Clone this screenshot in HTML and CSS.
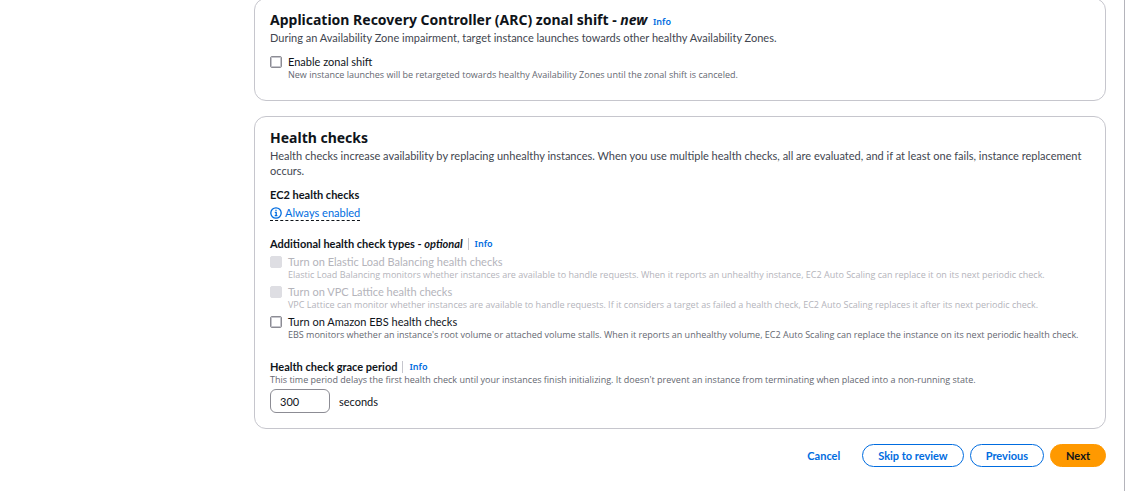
FILE: index.html
```html
<!DOCTYPE html>
<html lang="en">
<head>
<meta charset="utf-8">
<meta name="viewport" content="width=device-width, initial-scale=1">
<title>Health checks</title>
<link rel="stylesheet" href="styles.css">
</head>
<body>
<div class="shell">
  <main class="content">
    <section class="card card-zonal">
      <header class="card-header">
        <h2 class="card-title">Application Recovery Controller (ARC) zonal shift - <em>new</em> <a class="info" href="#">Info</a></h2>
        <p class="card-description">During an Availability Zone impairment, target instance launches towards other healthy Availability Zones.</p>
      </header>
      <div class="option">
        <input class="checkbox" type="checkbox" id="zonal" aria-describedby="zonal-hint">
        <label class="option-label" for="zonal">Enable zonal shift</label>
        <p class="hint" id="zonal-hint">New instance launches will be retargeted towards healthy Availability Zones until the zonal shift is canceled.</p>
      </div>
    </section>

    <section class="card">
      <header class="card-header">
        <h2 class="card-title">Health checks</h2>
        <p class="card-description">Health checks increase availability by replacing unhealthy instances. When you use multiple health checks, all are evaluated, and if at least one fails, instance replacement occurs.</p>
      </header>
      <div class="fields">
        <div class="field">
          <h3 class="field-title">EC2 health checks</h3>
          <button class="status" type="button">
            <svg class="status-icon" viewBox="0 0 12 12" aria-hidden="true"><circle cx="6" cy="6" r="5.2"/><path d="M4.8 5.4H6.2V8.5M4.7 8.7H7.4M5.4 3.4H6.6"/></svg>
            Always enabled
          </button>
        </div>
        <div class="field">
          <div class="field-heading">
            <h3 class="field-title">Additional health check types - <em>optional</em></h3>
            <a class="info info-divided" href="#">Info</a>
          </div>
          <div class="options">
            <div class="option option-disabled">
              <input class="checkbox" type="checkbox" id="elb" disabled aria-describedby="elb-hint">
              <label class="option-label" for="elb">Turn on Elastic Load Balancing health checks</label>
              <p class="hint" id="elb-hint">Elastic Load Balancing monitors whether instances are available to handle requests. When it reports an unhealthy instance, EC2 Auto Scaling can replace it on its next periodic check.</p>
            </div>
            <div class="option option-disabled">
              <input class="checkbox" type="checkbox" id="vpc" disabled aria-describedby="vpc-hint">
              <label class="option-label" for="vpc">Turn on VPC Lattice health checks</label>
              <p class="hint" id="vpc-hint">VPC Lattice can monitor whether instances are available to handle requests. If it considers a target as failed a health check, EC2 Auto Scaling replaces it after its next periodic check.</p>
            </div>
            <div class="option">
              <input class="checkbox" type="checkbox" id="ebs" aria-describedby="ebs-hint">
              <label class="option-label" for="ebs">Turn on Amazon EBS health checks</label>
              <p class="hint" id="ebs-hint">EBS monitors whether an instance's root volume or attached volume stalls. When it reports an unhealthy volume, EC2 Auto Scaling can replace the instance on its next periodic health check.</p>
            </div>
          </div>
        </div>
        <div class="field">
          <div class="field-heading">
            <label class="field-title" for="grace">Health check grace period</label>
            <a class="info info-divided" href="#">Info</a>
          </div>
          <p class="hint" id="grace-hint">This time period delays the first health check until your instances finish initializing. It doesn't prevent an instance from terminating when placed into a non-running state.</p>
          <div class="duration">
            <input class="number" type="text" inputmode="numeric" id="grace" value="300" aria-describedby="grace-hint">
            <span>seconds</span>
          </div>
        </div>
      </div>
    </section>

    <div class="actions">
      <button class="button button-link" type="button">Cancel</button>
      <button class="button" type="button">Skip to review</button>
      <button class="button" type="button">Previous</button>
      <button class="button button-primary" type="submit">Next</button>
    </div>
  </main>
</div>
</body>
</html>
```

FILE: styles.css
```css
* {
  box-sizing: border-box;
}

body {
  margin: 0;
  background: #fff;
  color: #0f141a;
  font: 11px/15px Lato, "Open Sans", sans-serif;
}

h2, h3, p {
  margin: 0;
}

button, input {
  font: inherit;
}

.shell {
  min-height: 100vh;
  margin-right: 2px;
  padding: 0 18px 0 254px;
  border-right: 1px solid #b4b4bb;
  overflow: hidden;
}

.content {
  display: flex;
  flex-direction: column;
  gap: 15px;
}

.card {
  padding: 11px 15px 15px;
  border: 1px solid #c6c6cd;
  border-radius: 12px;
}

.card-zonal {
  margin-top: -2px;
  padding-bottom: 19px;
}

.card-header {
  margin-bottom: 9px;
}

.card-title {
  font-family: "Noto Sans", sans-serif;
  font-size: 14px;
  line-height: 20px;
  font-weight: 700;
}

.card-description {
  color: #424650;
}

.info {
  margin-left: 2px;
  color: #006ce0;
  font-family: "Noto Sans", sans-serif;
  font-size: 9px;
  line-height: 12px;
  font-weight: 600;
  text-decoration: none;
}

.info-divided {
  margin-left: 5px;
  padding-left: 6px;
  border-left: 1px solid #c6c6cd;
}

.fields {
  display: flex;
  flex-direction: column;
  gap: 18px;
}

.field:first-child {
  margin-bottom: -3px;
}

.field-heading {
  display: flex;
  align-items: center;
}

.field-title {
  font-size: 11px;
  line-height: 15px;
  font-weight: 700;
}

.status {
  display: flex;
  align-items: center;
  gap: 3px;
  margin-top: 3px;
  padding: 0;
  border: 0;
  border-bottom: 1px dashed #0f141a;
  background: none;
  color: #006ce0;
}

.status-icon {
  width: 12px;
  height: 12px;
  fill: none;
  stroke: currentColor;
  stroke-width: 1.3;
}

.options {
  display: flex;
  flex-direction: column;
  gap: 3px;
  margin-top: 3px;
}

.option {
  display: grid;
  grid-template-columns: 12px 1fr;
  column-gap: 6px;
  align-items: center;
}

.checkbox {
  appearance: none;
  width: 12px;
  height: 12px;
  margin: 0;
  border: 1px solid #8c8c94;
  border-radius: 2px;
  box-shadow: inset 0 0 0 1px #c6c6cd;
}

.option .hint {
  grid-column: 2;
}

.hint {
  color: #656871;
  font-family: "Open Sans", "Noto Sans", sans-serif;
  font-size: 9px;
  line-height: 12px;
}

.option-disabled,
.option-disabled .hint {
  color: #b4b4bb;
}

.option-disabled .checkbox {
  border-color: #dedee3;
  background: #dedee3;
  box-shadow: none;
}

.duration {
  display: flex;
  align-items: center;
  gap: 9px;
  margin-top: 3px;
}

.number {
  width: 60px;
  height: 24px;
  padding: 0 9px;
  border: 1px solid #8c8c94;
  border-radius: 6px;
  background: #fff;
  color: inherit;
}

.actions {
  display: flex;
  justify-content: flex-end;
  gap: 6px;
}

.button {
  padding: 3px 15px;
  border: 1px solid #006ce0;
  border-radius: 12px;
  background: #fff;
  color: #006ce0;
  font-weight: 700;
}

.button-link {
  border-color: transparent;
}

.button-primary {
  border-color: #ff9900;
  background: #ff9900;
  color: #0f141a;
}
```
